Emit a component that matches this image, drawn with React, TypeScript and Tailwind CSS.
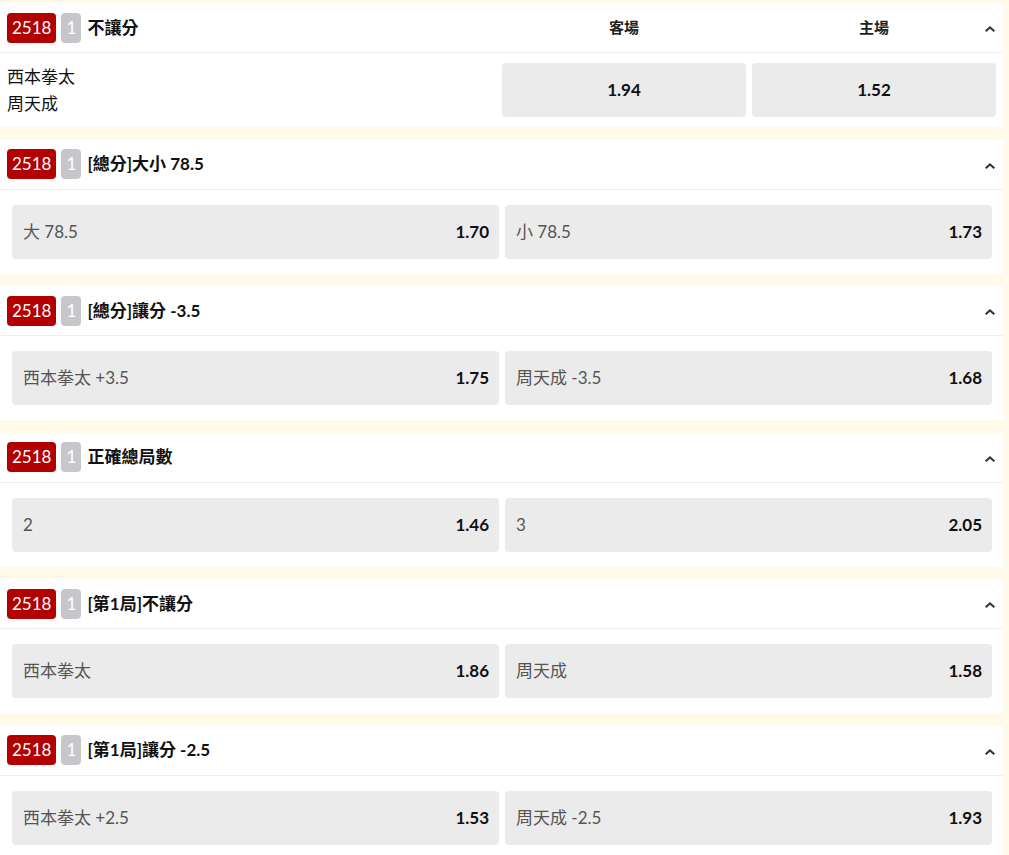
import React from "react";

type Market = {
    title: string;
    options: { label: string; odds: string }[];
};

const markets: Market[] = [
    {
        title: "[總分]大小 78.5",
        options: [
            { label: "大 78.5", odds: "1.70" },
            { label: "小 78.5", odds: "1.73" },
        ],
    },
    {
        title: "[總分]讓分 -3.5",
        options: [
            { label: "西本拳太 +3.5", odds: "1.75" },
            { label: "周天成 -3.5", odds: "1.68" },
        ],
    },
    {
        title: "正確總局數",
        options: [
            { label: "2", odds: "1.46" },
            { label: "3", odds: "2.05" },
        ],
    },
    {
        title: "[第1局]不讓分",
        options: [
            { label: "西本拳太", odds: "1.86" },
            { label: "周天成", odds: "1.58" },
        ],
    },
    {
        title: "[第1局]讓分 -2.5",
        options: [
            { label: "西本拳太 +2.5", odds: "1.53" },
            { label: "周天成 -2.5", odds: "1.93" },
        ],
    },
];

function Caret() {
    return (
        <svg
            width="10"
            height="6"
            viewBox="0 0 10 6"
            className="absolute right-[8px] top-[23px]"
        >
            <path d="M5 0 L10 4.6 L8.6 6 L5 2.8 L1.4 6 L0 4.6 Z" fill="#333" />
        </svg>
    );
}

function Header({ title, children }: { title: string; children?: React.ReactNode }) {
    return (
        <div className="relative h-[50px] flex items-center border-b border-[#eeeeee] pl-[7px]">
            <span className="h-[30px] px-[5px] rounded-[4px] bg-[#b30000] text-white text-[17px] leading-[30px]">
                2518
            </span>
            <span className="ml-[5px] h-[30px] w-[20px] rounded-[4px] bg-[#c7c7cb] text-white text-[17px] leading-[30px] text-center">
                1
            </span>
            <span className="ml-[6px] text-[17px] font-bold text-[#111]">
                {title}
            </span>
            {children}
            <Caret />
        </div>
    );
}

export default function App() {
    return (
        <div
            className="min-h-[855px] bg-[#fffaea] pt-[3px] pr-[6px] flex flex-col gap-[12.5px]"
            style={{ fontFamily: 'Lato, "Noto Sans CJK TC", sans-serif' }}
        >
            {/* 主盤 */}
            <div className="bg-white">
                <Header title="不讓分">
                    <div className="ml-auto mr-[7px] flex gap-[6px]">
                        <div className="w-[244px] text-center text-[15px] font-bold text-[#222]">客場</div>
                        <div className="w-[244px] text-center text-[15px] font-bold text-[#222]">主場</div>
                    </div>
                </Header>
                <div className="flex items-center py-[10px] pl-[7px] pr-[7px]">
                    <div className="flex-1 text-[17px] leading-[27px] text-[#111]">
                        <div>西本拳太</div>
                        <div>周天成</div>
                    </div>
                    <div className="flex gap-[6px]">
                        <div className="w-[244px] h-[54px] rounded-[4px] bg-[#ebebeb] flex items-center justify-center text-[17px] font-bold text-[#111]">
                            1.94
                        </div>
                        <div className="w-[244px] h-[54px] rounded-[4px] bg-[#ebebeb] flex items-center justify-center text-[17px] font-bold text-[#111]">
                            1.52
                        </div>
                    </div>
                </div>
            </div>

            {markets.map((m) => (
                <div key={m.title} className="bg-white">
                    <Header title={m.title} />
                    <div className="grid grid-cols-2 gap-[6px] pl-[12px] pr-[11px] py-[15px]">
                        {m.options.map((o) => (
                            <div
                                key={o.label}
                                className="h-[54px] rounded-[4px] bg-[#ebebeb] flex items-center justify-between pl-[11px] pr-[10px] text-[17px]"
                            >
                                <span className="text-[#555]">{o.label}</span>
                                <span className="font-bold text-[#111]">{o.odds}</span>
                            </div>
                        ))}
                    </div>
                </div>
            ))}
        </div>
    );
}
